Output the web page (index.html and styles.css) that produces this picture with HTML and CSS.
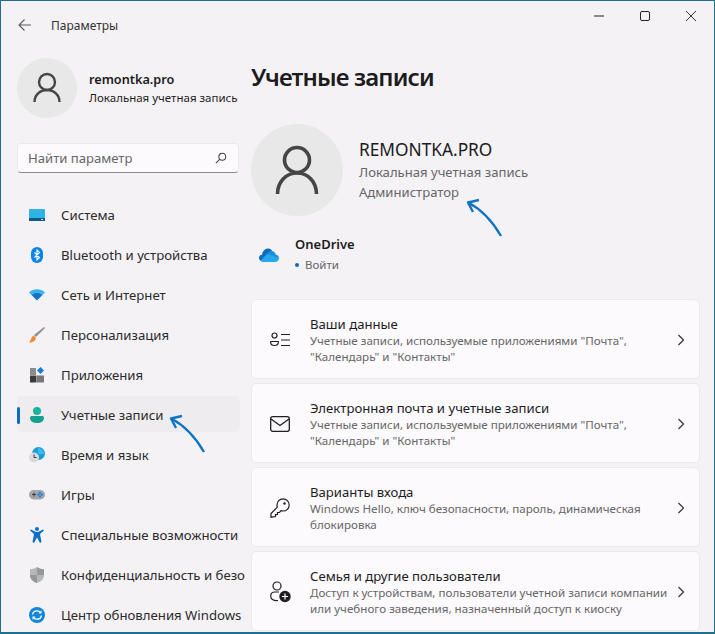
FILE: index.html
```html
<!DOCTYPE html>
<html lang="ru">
<head>
    <meta charset="utf-8">
    <title>Параметры</title>
    <link rel="stylesheet" href="styles.css">
</head>
<body>
    <div class="window">
        <div class="titlebar">
            <div class="titleLeft">
                <svg class="backIcon" width="16" height="16" viewBox="0 0 16 16" fill="none" stroke="#5d5b5e" stroke-width="1.1"><path d="M2 8H14M7.500 2.500L2 8L7.500 13.500"/></svg>
                <span class="titleText">Параметры</span>
            </div>
            <div class="windowButtons">
                <svg width="12" height="12" viewBox="0 0 12 12" stroke="#222" fill="none"><path d="M1 6H11"/></svg>
                <svg width="12" height="12" viewBox="0 0 12 12" stroke="#222" fill="none"><rect x="1.500" y="1.500" width="9" height="9" rx="1.500"/></svg>
                <svg width="12" height="12" viewBox="0 0 12 12" stroke="#333" fill="none"><path d="M1 1L11 11M11 1L1 11"/></svg>
            </div>
        </div>
        <div class="content">
            <div class="sidebar">
                <div class="profile">
                    <div class="avatarSmall">
                        <svg width="28" height="32" viewBox="0 0 28 32" fill="none" stroke="#454545" stroke-width="2.4"><circle cx="14" cy="10" r="8"/><path d="M1.500 30C1.500 23 7 18 14 18C21 18 26.500 23 26.500 30"/></svg>
                    </div>
                    <div>
                        <div class="profileName">remontka.pro</div>
                        <div class="profileType">Локальная учетная запись</div>
                    </div>
                </div>
                <div class="search">
                    <span>Найти параметр</span>
                    <svg width="12" height="12" viewBox="0 0 14 14" fill="none" stroke="#444" stroke-width="1.2"><circle cx="8.500" cy="5.500" r="4"/><path d="M5.500 8.500L1 13"/></svg>
                </div>
                <div class="nav">
                    <div class="navItem">
                        <svg class="navIcon" viewBox="0 0 16 12"><rect width="16" height="12" rx="1" fill="#2fb2e6"/><rect y="9" width="16" height="3" fill="#0f5a85"/><rect x="12" y="10" width="2" height="1" fill="#bfe4f5"/></svg>
                        <span>Система</span>
                    </div>
                    <div class="navItem">
                        <svg class="navIcon" viewBox="0 0 16 16"><rect x="2" y="0" width="12" height="16" rx="6" fill="#0a84ea"/><path d="M5.500 5.500L10.500 10.500L8 13V3L10.500 5.500L5.500 10.500" fill="none" stroke="#fff" stroke-width="1.1"/></svg>
                        <span>Bluetooth и устройства</span>
                    </div>
                    <div class="navItem">
                        <svg class="navIcon" viewBox="0 0 16 12"><path d="M0 3.500C4 -0.800 12 -0.800 16 3.500L13.500 6C10 3 6 3 2.500 6Z" fill="#35b6f0"/><path d="M2.500 6C6 3 10 3 13.500 6L8 11.500Z" fill="#0f74c8"/></svg>
                        <span>Сеть и Интернет</span>
                    </div>
                    <div class="navItem">
                        <svg class="navIcon" viewBox="0 0 16 16"><path d="M15 0L16 1L7 10L5 8Z" fill="#8e9195"/><path d="M4.500 8.500L7 11C6.500 14 3 16 0 15.500C2 14 2 10 4.500 8.500Z" fill="#ef8a2e"/></svg>
                        <span>Персонализация</span>
                    </div>
                    <div class="navItem">
                        <svg class="navIcon" viewBox="0 0 16 16"><rect x="1" y="1" width="6" height="7" fill="#8b8b8f"/><rect x="1" y="8.500" width="6.500" height="7" fill="#3b3b3d"/><rect x="8" y="8.500" width="7" height="7" fill="#77777a"/><path d="M11.500 0L15 3.500L11.500 7L8 3.500Z" fill="#0f7fdc"/></svg>
                        <span>Приложения</span>
                    </div>
                    <div class="navItem navActive">
                        <div class="activeBar"></div>
                        <svg class="navIcon" viewBox="0 0 16 16"><circle cx="8" cy="4" r="4" fill="#1cb39c"/><path d="M1 11C1 9.500 2 9 3 9H13C14 9 15 9.500 15 11C15 14 12 16 8 16C4 16 1 14 1 11Z" fill="#17a08f"/></svg>
                        <span>Учетные записи</span>
                    </div>
                    <div class="navItem">
                        <svg class="navIcon" viewBox="0 0 16 16"><circle cx="9.500" cy="6.500" r="6.500" fill="#1b9bdc"/><path d="M9 1A6 6 0 0 1 15 7L9 7Z" fill="#35c0e8"/><circle cx="5" cy="10.500" r="5" fill="#d9dadd"/><path d="M5 7.500V10.500H7.500" fill="none" stroke="#3d3d40"/></svg>
                        <span>Время и язык</span>
                    </div>
                    <div class="navItem">
                        <svg class="navIcon" viewBox="0 0 16 12"><rect y="1" width="16" height="9.500" rx="4.700" fill="#a3a5a9"/><path d="M3 5.500H7M5 3.500V7.500" stroke="#3d3d40"/><circle cx="11" cy="3.800" r="1.100" fill="#0f7fdc"/><circle cx="9.500" cy="5.700" r="1.100" fill="#0f7fdc"/><circle cx="12.700" cy="5.700" r="1.100" fill="#0f7fdc"/><circle cx="11" cy="7.500" r="1.100" fill="#0f7fdc"/></svg>
                        <span>Игры</span>
                    </div>
                    <div class="navItem">
                        <svg class="navIcon" viewBox="0 0 16 16"><circle cx="8" cy="2" r="2" fill="#0f6fc6"/><path d="M1 3.500L2 2.500L7 5H9L14 2.500L15 3.500L11 7L12.500 15L11 16L8 10.500L5 16L3.500 15L5 7Z" fill="#0f6fc6"/></svg>
                        <span>Специальные возможности</span>
                    </div>
                    <div class="navItem">
                        <svg class="navIcon" viewBox="0 0 16 16"><path d="M8 0C10 1.500 12.500 2.200 15 2.300V8C15 12 12 14.800 8 16C4 14.800 1 12 1 8V2.300C3.500 2.200 6 1.500 8 0Z" fill="#b4b6b9"/><path d="M8 0C10 1.500 12.500 2.200 15 2.300V8H8Z" fill="#96989c"/><path d="M8 8H1C1 12 4 14.800 8 16Z" fill="#96989c"/></svg>
                        <span>Конфиденциальность и безо</span>
                    </div>
                    <div class="navItem">
                        <svg class="navIcon" viewBox="0 0 16 16"><circle cx="8" cy="8" r="8" fill="#0f86dc"/><path d="M3.500 7.500C4 5 6 3.800 8 3.800C9.800 3.800 11 4.600 11.800 5.700M12.500 8.500C12 11 10 12.200 8 12.200C6.200 12.200 5 11.400 4.200 10.300" fill="none" stroke="#fff" stroke-width="1.300"/><path d="M12.500 3.300V6.500H9.500ZM3.500 12.700V9.500H6.500Z" fill="#fff"/></svg>
                        <span>Центр обновления Windows</span>
                    </div>
                </div>
            </div>
            <div class="main">
                <h1 class="heading">Учетные записи</h1>
                <div class="account">
                    <div class="avatarBig">
                        <svg width="44" height="50" viewBox="0 0 44 50" fill="none" stroke="#454545" stroke-width="3.600"><circle cx="22" cy="15" r="12.500"/><path d="M2.500 49C2.500 37 11 28 22 28C33 28 41.500 37 41.500 49"/></svg>
                    </div>
                    <div class="accountText">
                        <div class="accountName">REMONTKA.PRO</div>
                        <div class="accountInfo">Локальная учетная запись</div>
                        <div class="accountInfo">Администратор</div>
                    </div>
                </div>
                <div class="oneDrive">
                    <svg width="20" height="14" viewBox="0 0 20 14"><path d="M7 1C9 0 12 0.500 13 3L16 8L8 13H3C1 13 0 11.500 0 10C0 8 1.500 6.800 3 6.800C3.500 3.500 5 1.800 7 1Z" fill="#0f6cbd"/><path d="M13 3C15 3.200 16.500 4.800 16.500 6.500C18.500 6.800 20 8.200 20 10L12 9L8 6C9 4 11 2.800 13 3Z" fill="#1490df"/><path d="M8 6L20 10C20 12 18.500 14 16 14H4C3 14 2 13.600 1.500 12.800Z" fill="#28a8ea"/></svg>
                    <div>
                        <div class="driveName">OneDrive</div>
                        <div class="driveStatus"><span class="driveDot"></span>Войти</div>
                    </div>
                </div>
                <div class="cards">
                    <div class="card">
                        <div class="cardIcon"><svg width="20" height="20" viewBox="0 0 20 20" fill="none" stroke="#1f1f1f" stroke-width="1.200"><circle cx="4.500" cy="5.500" r="2.500"/><path d="M0.700 11.500H8.300V12.500C8.300 14.500 6.500 15.500 4.500 15.500C2.500 15.500 0.700 14.500 0.700 12.500Z"/><path d="M11 4.500H20M11 10H20M11 15.500H20"/></svg></div>
                        <div class="cardText">
                            <div class="cardTitle">Ваши данные</div>
                            <div class="cardDesc">Учетные записи, используемые приложениями "Почта",<br>"Календарь" и "Контакты"</div>
                        </div>
                        <svg class="chevron" width="8" height="12" viewBox="0 0 8 12" fill="none" stroke="#333" stroke-width="1.200"><path d="M1.500 1L6.500 6L1.500 11"/></svg>
                    </div>
                    <div class="card">
                        <div class="cardIcon"><svg width="20" height="18" viewBox="0 0 20 18" fill="none" stroke="#1f1f1f" stroke-width="1.300"><rect x="0.700" y="1.700" width="18.600" height="14.600" rx="2"/><path d="M1 4L10 10.500L19 4"/></svg></div>
                        <div class="cardText">
                            <div class="cardTitle">Электронная почта и учетные записи</div>
                            <div class="cardDesc">Учетные записи, используемые приложениями "Почта",<br>"Календарь" и "Контакты"</div>
                        </div>
                        <svg class="chevron" width="8" height="12" viewBox="0 0 8 12" fill="none" stroke="#333" stroke-width="1.200"><path d="M1.500 1L6.500 6L1.500 11"/></svg>
                    </div>
                    <div class="card">
                        <div class="cardIcon"><svg width="20" height="20" viewBox="0 0 20 20" fill="none" stroke="#1f1f1f" stroke-width="1.200"><path d="M7 7C7 3.500 9.500 0.800 13 0.800C16.500 0.800 19.200 3.500 19.200 7C19.200 10.500 16.500 13 13 13C12.300 13 11.700 12.900 11 12.700L9.500 14.500H7.500V16.500H5.500V18.500L1 19.200V15.500L7.300 9.200C7.100 8.500 7 7.800 7 7Z"/><circle cx="14.500" cy="5.500" r="1.200" fill="#1f1f1f" stroke="none"/></svg></div>
                        <div class="cardText">
                            <div class="cardTitle">Варианты входа</div>
                            <div class="cardDesc">Windows Hello, ключ безопасности, пароль, динамическая<br>блокировка</div>
                        </div>
                        <svg class="chevron" width="8" height="12" viewBox="0 0 8 12" fill="none" stroke="#333" stroke-width="1.200"><path d="M1.500 1L6.500 6L1.500 11"/></svg>
                    </div>
                    <div class="card">
                        <div class="cardIcon"><svg width="21" height="22" viewBox="0 0 21 22" fill="none" stroke="#1f1f1f" stroke-width="1.200"><circle cx="7" cy="5" r="4"/><path d="M0.700 15C0.700 12 2.500 11 5 11H9M0.700 15C0.700 18.500 4 20 8 19.500"/><circle cx="15" cy="15.500" r="5.700" fill="#1f1f1f" stroke="none"/><path d="M15 12.500V18.500M12 15.500H18" stroke="#fff"/></svg></div>
                        <div class="cardText">
                            <div class="cardTitle">Семья и другие пользователи</div>
                            <div class="cardDesc">Доступ к устройствам, пользователи учетной записи компании<br>или учебного заведения, назначенный доступ к киоску</div>
                        </div>
                        <svg class="chevron" width="8" height="12" viewBox="0 0 8 12" fill="none" stroke="#333" stroke-width="1.200"><path d="M1.500 1L6.500 6L1.500 11"/></svg>
                    </div>
                </div>
            </div>
        </div>
        <!-- annotation arrows drawn over the screenshot -->
        <svg class="arrow arrowNav" width="38" height="42" viewBox="0 0 38 42" fill="none" stroke="#0f74c4" stroke-width="2.400"><path d="M35 39C28 27 18 14 3 6"/><path d="M13 3L2 5.500L7 15" stroke-linejoin="round"/></svg>
        <svg class="arrow arrowAdmin" width="38" height="42" viewBox="0 0 38 42" fill="none" stroke="#0f74c4" stroke-width="2.400"><path d="M35 39C28 27 18 14 3 6"/><path d="M13 3L2 5.500L7 15" stroke-linejoin="round"/></svg>
    </div>
</body>
</html>
```

FILE: styles.css
```css
body {
    margin: 0;
    font-family: "Noto Sans", "Open Sans", sans-serif;
    color: #1c1c1c;
}

.window {
    position: relative;
    box-sizing: border-box;
    width: 715px;
    height: 634px;
    overflow: hidden;
    display: flex;
    flex-direction: column;
    background-color: #f5f2f6;
    border-style: solid;
    border-color: #1f6f8e;
    border-width: 1px 1px 2px 1px;
}

.titlebar {
    flex: none;
    height: 49px;
    display: flex;
    align-items: center;
    justify-content: space-between;
}

.titleLeft {
    display: flex;
    align-items: center;
    gap: 18px;
    padding-left: 16px;
}

.backIcon {
    margin-top: -2px;
}

.titleText {
    font-size: 12px;
    color: #333;
}

.windowButtons {
    display: flex;
    gap: 34px;
    padding-right: 17px;
    margin-top: -20px;
}

.content {
    flex: 1;
    display: flex;
    min-height: 0;
}

.sidebar {
    flex: none;
    width: 250px;
    overflow: hidden;
    white-space: nowrap;
}

.profile {
    display: flex;
    align-items: center;
    gap: 12px;
    margin: 8px 0 0 16px;
}

.avatarSmall {
    flex: none;
    width: 60px;
    height: 60px;
    border-radius: 50%;
    background-color: #e8e8e8;
    display: flex;
    align-items: center;
    justify-content: center;
}

.profileName {
    font-size: 12.700px;
    font-weight: 600;
    line-height: 19px;
}

.profileType {
    font-size: 11.500px;
    line-height: 17px;
}

.search {
    box-sizing: border-box;
    width: 222px;
    height: 30px;
    margin: 25px 0 0 16px;
    padding: 0 11px 0 10px;
    display: flex;
    align-items: center;
    justify-content: space-between;
    font-size: 13.100px;
    color: #666;
    background-color: #fcfafd;
    border: 1px solid #ebe9ec;
    border-bottom-color: #8a8a8a;
    border-radius: 4px;
}

.nav {
    display: flex;
    flex-direction: column;
    gap: 4px;
    margin-top: 24px;
}

.navItem {
    position: relative;
    box-sizing: border-box;
    width: 223px;
    height: 36px;
    margin-left: 16px;
    display: flex;
    align-items: center;
    gap: 16px;
    padding-left: 12px;
    font-size: 13.200px;
    color: #2a2a2a;
}

.navActive {
    margin-top: -1px;
    margin-bottom: 1px;
    padding-top: 2px;
    background-color: #eeecef;
    border-radius: 5px;
}

.activeBar {
    position: absolute;
    left: 0;
    top: 11px;
    width: 3px;
    height: 17px;
    border-radius: 2px;
    background-color: #0f6cbd;
}

.navIcon {
    flex: none;
    width: 16px;
    height: 16px;
}

.main {
    flex: 1;
    min-width: 0;
    padding-right: 14px;
}

.heading {
    margin: 6px 0 0 0;
    font-size: 24px;
    font-weight: 600;
    line-height: 42px;
    letter-spacing: -0.85px;
}

.account {
    display: flex;
    align-items: center;
    gap: 16px;
    margin-top: 26px;
}

.avatarBig {
    flex: none;
    width: 92px;
    height: 92px;
    border-radius: 50%;
    background-color: #e8e8e8;
    display: flex;
    align-items: center;
    justify-content: center;
}

.accountName {
    font-size: 17.300px;
    line-height: 24px;
}

.accountInfo {
    font-size: 13.100px;
    line-height: 20px;
    color: #666;
}

.oneDrive {
    display: flex;
    align-items: center;
    gap: 16px;
    margin: 18px 0 0 8px;
}

.driveName {
    font-size: 13px;
    font-weight: 600;
    line-height: 20px;
}

.driveStatus {
    display: flex;
    align-items: center;
    gap: 6px;
    font-size: 11.500px;
    line-height: 22px;
    color: #666;
}

.driveDot {
    width: 4px;
    height: 4px;
    border-radius: 50%;
    background-color: #0f6cbd;
}

.cards {
    display: flex;
    flex-direction: column;
    gap: 4px;
    margin-top: 23px;
}

.card {
    flex: none;
    box-sizing: border-box;
    height: 80px;
    display: flex;
    align-items: center;
    padding: 1px 14px 0 18px;
    background-color: #fcfafd;
    border: 1px solid #ebe9ec;
    border-radius: 5px;
}

.cardIcon {
    flex: none;
    width: 21px;
    display: flex;
}

.cardText {
    flex: 1;
    margin-left: 19px;
    padding-top: 1px;
    white-space: nowrap;
}

.cardTitle {
    font-size: 13.150px;
    line-height: 18px;
}

.cardDesc {
    font-size: 11.600px;
    line-height: 16px;
    color: #666;
}

.arrow {
    position: absolute;
}

.arrowNav {
    left: 168px;
    top: 412px;
}

.arrowAdmin {
    left: 465px;
    top: 196px;
}
```
